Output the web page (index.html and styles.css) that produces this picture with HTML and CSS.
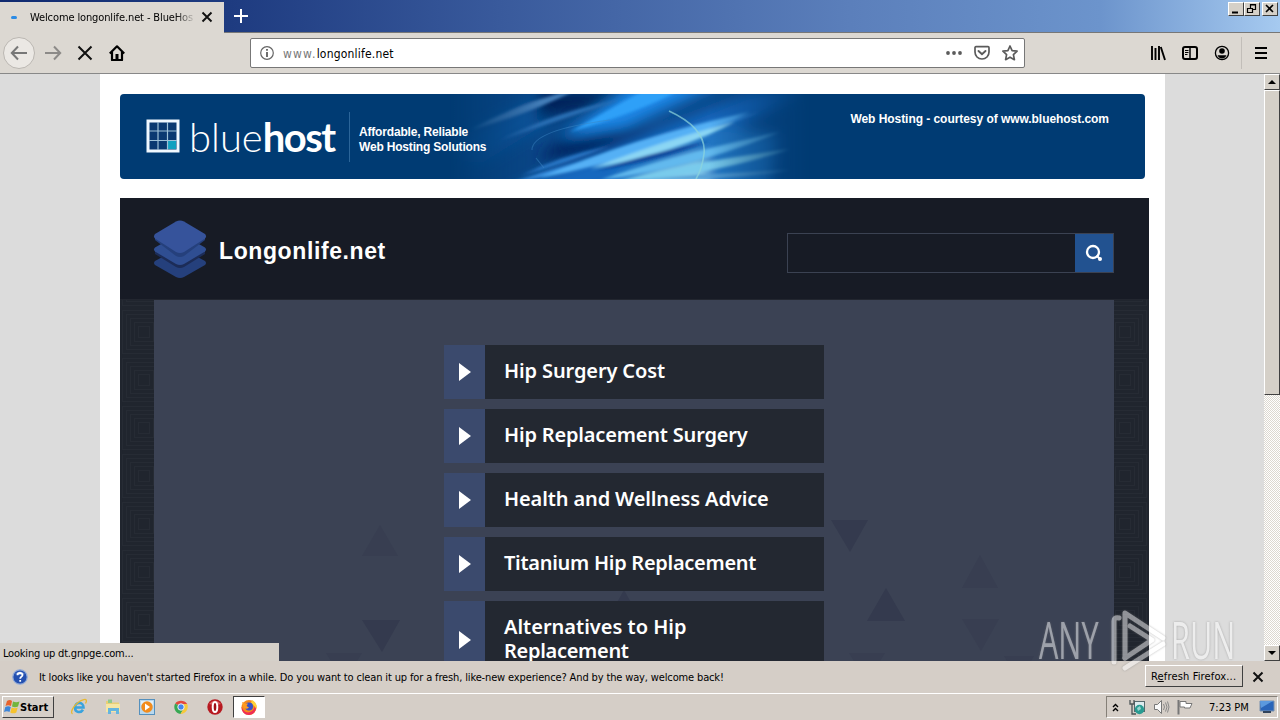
FILE: index.html
```html
<!DOCTYPE html>
<html lang="en">
<head>
  <meta charset="UTF-8" />
  <meta name="viewport" content="width=device-width, initial-scale=1.0"/>
  <title>Welcome longonlife.net - BlueHost</title>
  <link rel="stylesheet" href="styles.css">
</head>
<body>
  <div class="tab_bar">
    <div class="tab">
      <span class="tab_loader"></span>
      <span class="tab_title">Welcome longonlife.net - BlueHost</span>
      <svg class="tab_close" width="12" height="12" viewBox="0 0 12 12"><path d="M1.5 1.5l9 9M10.500 1.500l-9 9" stroke="#111" stroke-width="1.900"/></svg>
    </div>
    <svg class="new_tab" width="14" height="14" viewBox="0 0 14 14"><path d="M7 0v14M0 7h14" stroke="#fff" stroke-width="2"/></svg>
    <div class="window_buttons">
      <span class="window_button"><svg width="14" height="12" viewBox="0 0 14 12"><path d="M3 9.500h6" stroke="#000" stroke-width="2"/></svg></span>
      <span class="window_button"><svg width="14" height="12" viewBox="0 0 14 12"><path d="M5.500 5V1.500h5v5H8M5 2h6M2.500 5.500h5v4h-5zM2 5.500h6" fill="none" stroke="#000" stroke-width="1.200"/></svg></span>
      <span class="window_button close_button"><svg width="14" height="12" viewBox="0 0 14 12"><path d="M3 2l7 7M10 2l-7 7" stroke="#000" stroke-width="1.600"/></svg></span>
    </div>
  </div>

  <div class="toolbar">
    <span class="back_button"><svg width="18" height="16" viewBox="0 0 18 16"><path d="M17 8H2M8 1.500L1.800 8 8 14.500" fill="none" stroke="#777" stroke-width="2"/></svg></span>
    <svg class="forward_icon" width="18" height="16" viewBox="0 0 18 16"><path d="M1 8h15M10 1.500L16.200 8 10 14.500" fill="none" stroke="#8c8a88" stroke-width="2"/></svg>
    <svg class="stop_icon" width="16" height="16" viewBox="0 0 16 16"><path d="M1.500 1.500l13 13M14.500 1.500l-13 13" stroke="#111" stroke-width="2"/></svg>
    <svg class="home_icon" width="16" height="16" viewBox="0 0 16 16"><path d="M.8 8.500L8 1.300l7.200 7.200M3 7v8h10V7" fill="none" stroke="#000" stroke-width="2.200" stroke-linejoin="round"/><path d="M6.500 9h3v6h-3z"/></svg>
    <div class="url_bar">
      <svg class="info_icon" width="14" height="14" viewBox="0 0 14 14"><circle cx="7" cy="7" r="6.300" fill="none" stroke="#666" stroke-width="1.200"/><path d="M7 6v5M7 3v1.800" stroke="#555" stroke-width="1.700"/></svg>
      <p class="url"><span class="url_www">www.</span><span class="url_domain">longonlife.net</span></p>
      <svg class="dots_icon" width="16" height="16" viewBox="0 0 16 16" fill="#5b5b5b"><circle cx="2" cy="8" r="1.900"/><circle cx="8" cy="8" r="1.900"/><circle cx="14" cy="8" r="1.900"/></svg>
      <svg class="pocket_icon" width="16" height="16" viewBox="0 0 16 16" fill="none" stroke="#5b5b5b"><path d="M2 1.700h12c.7 0 1 .4 1 1V7c0 4-3 7-7 7S1 11 1 7V2.700c0-.6.300-1 1-1z" stroke-width="1.700"/><path d="M4.500 6L8 9.300 11.500 6" stroke-width="1.900" stroke-linecap="round"/></svg>
      <svg class="star_icon" width="16" height="16" viewBox="0 0 16 16"><path d="M8 1l2.100 4.600 5 .6-3.700 3.500 1 5L8 12.200l-4.400 2.500 1-5L.9 6.200l5-.6z" fill="none" stroke="#5b5b5b" stroke-width="1.700" stroke-linejoin="round"/></svg>
    </div>
    <svg class="library_icon" width="16" height="16" viewBox="0 0 16 16"><path d="M2 1v14M5.500 3v12M9 1v14M10.800 2l4.200 13" stroke="#000" stroke-width="1.900"/></svg>
    <svg class="sidebar_icon" width="16" height="16" viewBox="0 0 16 16"><rect x="1" y="2" width="14" height="12" rx="2" fill="none" stroke="#000" stroke-width="2"/><path d="M8 2v12" stroke="#000" stroke-width="1.500"/><path d="M3 5.500h3.500M3 7.500h3.500M3 9.500h2.500" stroke="#000"/></svg>
    <svg class="account_icon" width="16" height="16" viewBox="0 0 16 16"><circle cx="8" cy="8" r="6.600" fill="none" stroke="#000" stroke-width="1.300"/><circle cx="8" cy="6" r="2.800"/><path d="M3.500 10.300h9c-1 2.300-2.600 3.200-4.500 3.200s-3.500-.9-4.500-3.200z"/></svg>
    <span class="toolbar_line"></span>
    <svg class="menu_icon" width="14" height="14" viewBox="0 0 14 14"><path d="M1 2h12M1 7h12M1 12h12" stroke="#000" stroke-width="2"/></svg>
  </div>

  <div class="viewport">
    <div class="page">
      <div class="banner">
        <svg class="banner_art" width="360" height="85" viewBox="0 0 360 85">
          <defs>
            <linearGradient id="fade" x1="0" x2="1" y1="0" y2="0">
              <stop offset="0" stop-color="#fff" stop-opacity="0"/>
              <stop offset=".25" stop-color="#fff"/>
              <stop offset=".72" stop-color="#fff"/>
              <stop offset="1" stop-color="#fff" stop-opacity="0"/>
            </linearGradient>
            <mask id="edges"><rect width="360" height="85" fill="url(#fade)"/></mask>
            <filter id="soft" filterUnits="userSpaceOnUse" x="-40" y="-40" width="440" height="170"><feGaussianBlur stdDeviation="7"/></filter>
            <filter id="thin" filterUnits="userSpaceOnUse" x="-40" y="-40" width="440" height="170"><feGaussianBlur stdDeviation="1.500"/></filter>
          </defs>
          <g mask="url(#edges)">
            <rect width="360" height="85" fill="#0a4788"/>
            <g filter="url(#soft)">
              <path d="M-20 60L110-10h50L30 70z" fill="#0d559c"/>
              <path d="M90-5h90L140 14 85 26z" fill="#03215a"/>
              <path d="M85 66L120 40 210 30 160 60z" fill="#05235f"/>
              <path d="M110 44L190-15h90L175 34z" fill="#1b86e6"/>
              <path d="M30 110L120 70 300 0 370-10 240 60 140 100z" fill="#1468bf"/>
              <path d="M150 105L180 66 270 32 330 40 320 105z" fill="#2377c4"/>
              <path d="M170 105L210 76 255 60 258 105z" fill="#86cdec"/>
            </g>
            <g filter="url(#thin)">
              <path d="M120 38Q165 12 195-4h35Q190 18 120 38z" fill="#2da0f8"/>
              <path d="M20 36Q70 8 130-6 80 20 20 36z" fill="#427db8"/>
              <path d="M50 46Q110 16 170 6 110 26 50 46z" fill="#2a6fb5"/>
              <path d="M50 92Q150 60 310 18 210 58 50 92z" fill="#3a92e2"/>
              <path d="M90 84Q180 44 300 18 210 60 90 84z" fill="#55b0f5"/>
              <path d="M140 75Q220 44 285 28 230 58 140 75z" fill="#8bd6f4"/>
              <path d="M145 77Q200 59 260 47 210 67 145 77z" fill="#0c489c"/>
              <path d="M150 86Q210 64 330 38 240 75 150 86z" fill="#62b9ee"/>
              <path d="M165 88Q230 70 340 55 260 82 165 88z" fill="#79cbec"/>
              <path d="M190 86Q250 80 340 76 280 87 190 86z" fill="#549fd6"/>
              <path d="M70 82Q110 62 160 52 120 68 70 82z" fill="#2b78c8"/>
            </g>
            <path d="M219 17C245 29 256 43 254 60Q252 75 246 85" fill="none" stroke="#8fd5dc" stroke-width="1.600" opacity=".7"/>
            <path d="M160 26Q82 36 82 56M86 64l8 10" fill="none" stroke="#3b85c4" stroke-width="1.200" opacity=".5"/>
          </g>
        </svg>
        <svg class="banner_logo" width="34" height="34" viewBox="0 0 34 34">
          <rect x="2" y="2" width="30" height="30" fill="#0a3971" stroke="#f0f8ff" stroke-width="3"/>
          <path d="M22 22h8v8h-8z" fill="#12a0c0"/>
          <path d="M12 3v28M21.500 3v28M3 12h28M3 21.500h28" stroke="#9ec1d8" stroke-width="1.200"/>
        </svg>
        <p class="banner_name"><span class="name_light">blue</span><span class="name_bold">host</span></p>
        <p class="banner_slogan">Affordable, Reliable<br>Web Hosting Solutions</p>
        <p class="banner_courtesy">Web Hosting - courtesy of www.bluehost.com</p>
      </div>

      <div class="site">
        <div class="site_header">
          <svg class="site_logo" width="54" height="60" viewBox="0 0 54 60">
            <path d="M2 41L24 29q3-1.500 6 0l22 12q2 2 0 4L31 57q-4 2-8 0L2 45q-2-2 0-4z" fill="#25407c"/>
            <path d="M2 30L27 40l25-10v4L31 47q-4 2-8 0L2 34z" fill="#1c2c57"/>
            <path d="M2 27.500L24 15q3-1.500 6 0l22 12.500q2 2 0 4L31 44q-4 2-8 0L2 31.500q-2-2 0-4z" fill="#2f4e92"/>
            <path d="M2 16h50v4L31 36q-4 2-8 0L2 20z" fill="#25407c"/>
            <path d="M2 14L23 1.500q4-2 8 0L52 14q2 2 0 4.500L31 32q-4 2-8 0L2 18.500q-2-2 0-4.500z" fill="#36539b"/>
          </svg>
          <h1 class="site_title">Longonlife.net</h1>
          <div class="search">
            <span class="search_input"></span>
            <span class="search_button"><svg width="18" height="18" viewBox="0 0 18 18"><circle cx="8" cy="8" r="6" fill="none" stroke="#fff" stroke-width="2.300"/><path d="M11.500 11.500l3 3" stroke="#fff" stroke-width="2"/><circle cx="15" cy="15" r="2" fill="#fff"/></svg></span>
          </div>
        </div>
        <div class="site_body">
          <svg class="side_pattern" width="34" height="361">
            <defs>
              <pattern id="squares" width="48" height="48" patternUnits="userSpaceOnUse" x="0" y="8">
                <g fill="none" stroke="#2a2f39"><rect x="2.500" y="2.500" width="43" height="43"/><rect x="6.500" y="6.500" width="35" height="35"/><rect x="10.500" y="10.500" width="27" height="27"/><rect x="14.500" y="14.500" width="19" height="19"/><rect x="18.500" y="18.500" width="11" height="11"/></g>
              </pattern>
            </defs>
            <rect width="34" height="361" fill="url(#squares)"/>
          </svg>
          <div class="content">
            <svg class="triangles" width="960" height="361" viewBox="0 0 960 361">
              <g fill="#343a4e">
                <path d="M677 220h37l-18 32z"/>
                <path d="M732 288l19 33h-38z"/>
                <path d="M208 320h38l-18 32z"/>
                <path d="M470 290l18 32h-36z"/>
              </g>
              <g fill="#383e51">
                <path d="M826 255l18 33h-36z"/>
                <path d="M808 319h37l-18 32z"/>
                <path d="M226 225l18 31h-36z"/>
                <path d="M172 353h36l-5 8h-26zM695 353h36l-5 8h-26zM850 356h30l-3 5h-24z"/>
              </g>
            </svg>
            <div class="links">
              <div class="link"><span class="link_arrow"></span><p class="link_text link_cost">Hip Surgery Cost</p></div>
              <div class="link"><span class="link_arrow"></span><p class="link_text link_surgery">Hip Replacement Surgery</p></div>
              <div class="link"><span class="link_arrow"></span><p class="link_text link_health">Health and Wellness Advice</p></div>
              <div class="link"><span class="link_arrow"></span><p class="link_text link_titanium">Titanium Hip Replacement</p></div>
              <div class="link"><span class="link_arrow"></span><p class="link_text">Alternatives to Hip<br><span class="link_second">Replacement</span></p></div>
            </div>
          </div>
          <svg class="side_pattern right_pattern" width="35" height="361"><rect x="-13" width="48" height="361" fill="url(#squares)"/></svg>
        </div>
      </div>
    </div>
    <div class="scrollbar">
      <span class="scroll_button"><svg width="8" height="4" viewBox="0 0 8 4"><path d="M4 0l4 4H0z"/></svg></span>
      <span class="scroll_thumb"></span>
      <span class="scroll_space"></span>
      <span class="scroll_button"><svg width="8" height="4" viewBox="0 0 8 4"><path d="M0 0h8L4 4z"/></svg></span>
    </div>
    <div class="status">Looking up dt.gnpge.com...</div>
  </div>

  <div class="notice">
    <svg class="help_icon" width="16" height="16" viewBox="0 0 16 16"><circle cx="8" cy="8" r="7.200" fill="#2450b0" stroke="#8fa9d8" stroke-width="1.200"/><path d="M3 5q5-5 10 0-5 2-10 0z" fill="#6488d2"/><path d="M5.500 6.200C5.500 3.300 10.500 3.300 10.500 6c0 1.600-2.300 1.700-2.300 3.700M8.200 10.900v1.900" fill="none" stroke="#fff" stroke-width="1.800"/></svg>
    <p class="notice_text">It looks like you haven't started Firefox in a while. Do you want to clean it up for a fresh, like-new experience? And by the way, welcome back!</p>
    <div class="refresh_button">R<u>e</u>fresh Firefox...</div>
    <svg class="notice_close" width="12" height="12" viewBox="0 0 12 12"><path d="M1.500 1.500l9 9M10.500 1.500l-9 9" stroke="#111" stroke-width="2"/></svg>
  </div>

  <div class="taskbar">
    <div class="start_button">
      <svg width="16" height="16" viewBox="0 0 16 16"><path d="M3 2q3-2 5 0L7 7Q4 5.500 1.500 7z" fill="#e8622c"/><path d="M9 2.500q3 1.500 6.500 0L14 7.500q-3 1.500-6 0z" fill="#72b53c"/><path d="M1.300 8q3-1.700 5.500 0L5.500 13Q3 11.500 0 13z" fill="#3d85d8"/><path d="M7.700 8.500q3 1.500 6 0L12.300 13.500q-3 1.700-6 0z" fill="#f6c22d"/></svg>
      <span>Start</span>
    </div>
    <svg class="task_icon ie_icon" width="18" height="18" viewBox="0 0 18 18"><path d="M4.500 9.500h9c0-6-8.500-6-8.500 0 0 5.500 6 5.500 8 2.300" fill="none" stroke="#3aa3dd" stroke-width="2.600"/><path d="M2.500 16C-1 14 6 4 13 1.800c4-1.300 4 1.200 2.500 3.700" fill="none" stroke="#e8b830" stroke-width="1.300"/></svg>
    <svg class="task_icon" width="18" height="18" viewBox="0 0 18 18"><path d="M2 3h5l1 1.500h7V14H2z" fill="#e9cf75"/><path d="M4 1.500h4V5H4z" fill="#8fc98d"/><path d="M2 6h14v8H2z" fill="#f5e6a4"/><path d="M4 16V10h11v6h-3v-3H7v3z" fill="#65b5df"/></svg>
    <svg class="task_icon" width="18" height="18" viewBox="0 0 18 18"><rect x="1.500" y="1.500" width="15" height="15" fill="#b9d8ee" stroke="#5590bd"/><path d="M3 3h12v4H3z" fill="#e1f0fa"/><circle cx="9" cy="9" r="5.700" fill="#f28c1d"/><path d="M7 5.500l5 3.500-5 3.500z" fill="#fff"/></svg>
    <svg class="task_icon" width="18" height="18" viewBox="0 0 18 18"><path d="M9 9L3.200 5.500C5.500 1.800 12.500 1.500 15.200 6H9z" fill="#e4483c"/><path d="M9 9l-5.800-3.500C.8 9.500 3.200 15.300 8.500 16l3-5z" fill="#38a853"/><path d="M9 6h6.200c2 4.500-1.400 10-6.700 10l3.500-6z" fill="#f6c93b"/><circle cx="9" cy="9" r="3.200" fill="#4386ed" stroke="#f2f2f2"/></svg>
    <svg class="task_icon" width="18" height="18" viewBox="0 0 18 18"><circle cx="9" cy="9" r="7.700" fill="#b71920"/><path d="M3 6q6-7 12 0-6 2-12 0z" fill="#dc6264"/><ellipse cx="9" cy="9" rx="2.300" ry="5" fill="#a00f17" stroke="#fff" stroke-width="2"/></svg>
    <div class="task_active">
      <svg width="18" height="18" viewBox="0 0 18 18"><circle cx="9" cy="9.500" r="7.500" fill="#f78a1d"/><path d="M13 3c5 4 4 13-4 14-5 0-8-4-7.300-8.500C3 14 8 16 12 13s3-7 1-10z" fill="#ef2d55"/><path d="M12 2c4 2 5.500 6 4.300 9C15 8 13 7 11 5z" fill="#ffd338"/><circle cx="9" cy="8.500" r="4" fill="#3851c7"/><path d="M2 4l3 1.500h3L6.500 8 9 9.500Q6 12 3.500 9.500z" fill="#ff9b20"/></svg>
    </div>
    <div class="tray">
      <svg class="tray_arrows" width="7" height="9" viewBox="0 0 7 9"><path d="M1 4l2.500-2.500L6 4M1 8l2.500-2.500L6 8" fill="none" stroke="#000" stroke-width="1.400"/></svg>
      <svg class="tray_network" width="16" height="16" viewBox="0 0 16 16"><rect x="5.500" y="2.500" width="10" height="10" fill="#dcebee" stroke="#56696d"/><path d="M1 1v4h4V1M3 5v10h4" fill="none" stroke="#4d5557" stroke-width="1.300"/><circle cx="10.500" cy="10.500" r="4.700" fill="#299b91"/><path d="M8 9l3-2 1 3-3 2z" fill="#9bd5d0"/></svg>
      <svg class="tray_sound" width="17" height="16" viewBox="0 0 17 16"><path d="M1.500 5.500h3l4-4v13l-4-4h-3z" fill="#f8f8f8" stroke="#777"/><path d="M10.500 5q2 3 0 6M12.500 3.500q3 4.500 0 9M14.500 2.500q3 5.500 0 11" fill="none" stroke="#888"/></svg>
      <svg class="tray_flag" width="16" height="16" viewBox="0 0 16 16"><path d="M1.500 1v14.500" stroke="#777" stroke-width="2"/><path d="M3 2.500h6v2h6l-2 4.500H7.500V8H3z" fill="#fff" stroke="#777"/></svg>
      <span class="clock">7:23 PM</span>
      <svg class="tray_desktop" width="16" height="14" viewBox="0 0 16 14"><path d="M1 1h14v10H1z" fill="#2a65b9" stroke="#7890ad"/><path d="M1 1h13L2 8z" fill="#5b99de"/><path d="M4 11h8v2H4z" fill="#31435c"/></svg>
    </div>
  </div>

  <div class="watermark">
    <span class="mark_any">ANY</span>
    <svg width="62" height="66" viewBox="0 0 62 66"><g fill="none" stroke="#fff" stroke-width="5" stroke-linejoin="round" stroke-linecap="round"><path d="M10 11q-5-1-5 3v41"/><path d="M16 51V6l38 25"/><path d="M21 19l22 14-27 18"/><path d="M54 37L16 61"/></g></svg>
    <span class="mark_run">RUN</span>
  </div>
</body>
</html>
```

FILE: styles.css
```css
body {
  margin: 0;
  width: 1280px;
  height: 720px;
  overflow: hidden;
  position: relative;
  display: flex;
  flex-direction: column;
  font-family: "DejaVu Sans Condensed", "DejaVu Sans", sans-serif;
  font-stretch: condensed;
  font-size: 11px;
  color: #000;
}

p, h1 {
  margin: 0;
}

svg {
  display: block;
  flex-shrink: 0;
}

span {
  white-space: nowrap;
}

.tab_bar {
  height: 33px;
  box-sizing: border-box;
  display: flex;
  border-bottom: 1px solid #777;
  background: linear-gradient(90deg, #102a70 0, #1e3b80 230px, #395a9c 500px, #5b7fbb 850px, #6c94cc 1100px, #a6caf0 1280px);
}

.tab {
  width: 224px;
  height: 31px;
  margin-top: 2px;
  padding-bottom: 1px;
  margin-bottom: -1px;
  display: flex;
  align-items: center;
  background: #dcd8d2;
}

.tab_loader {
  width: 6px;
  height: 3px;
  margin-left: 11px;
  border-radius: 2px;
  background: #2b8be5;
}

.tab_title {
  width: 163px;
  margin-left: 13px;
  overflow: hidden;
  letter-spacing: -0.12px;
  -webkit-mask-image: linear-gradient(90deg, #000 145px, transparent 166px);
}

.tab_close {
  margin: -2px 0 0 8px;
}

.new_tab {
  margin: 9px 0 0 10px;
}

.window_buttons {
  display: flex;
  margin: 2px 2px 0 auto;
}

.window_button {
  width: 16px;
  height: 14px;
  box-sizing: border-box;
  border: 1px solid;
  border-color: #fff #404040 #404040 #fff;
  background: #d5d0c8;
}

.close_button {
  margin-left: 2px;
}

.toolbar {
  height: 41px;
  box-sizing: border-box;
  display: flex;
  align-items: center;
  border-bottom: 1px solid #888;
  background: #dcd8d2;
}

.back_button {
  width: 32px;
  height: 32px;
  margin-left: 3px;
  box-sizing: border-box;
  border: 1px solid #bbb7b2;
  border-radius: 50%;
  display: flex;
  align-items: center;
  justify-content: center;
  background: #ebe8e4;
}

.forward_icon {
  margin-left: 9px;
}

.stop_icon {
  margin-left: 15px;
}

.home_icon {
  margin-left: 16px;
}

.url_bar {
  width: 775px;
  height: 30px;
  margin-left: 125px;
  box-sizing: border-box;
  border: 1px solid #777;
  border-radius: 2px;
  display: flex;
  align-items: center;
  background: #fff;
}

.info_icon {
  margin-left: 9px;
}

.url {
  margin-left: 9px;
  padding-top: 1px;
  font-size: 12px;
}

.url_www {
  letter-spacing: 1.2px;
  color: #777;
}

.url_domain {
  letter-spacing: 0.2px;
}

.dots_icon {
  margin-left: auto;
}

.pocket_icon {
  margin-left: 12px;
}

.star_icon {
  margin: 0 6px 0 12px;
}

.library_icon {
  margin-left: 125px;
}

.sidebar_icon,
.account_icon {
  margin-left: 16px;
}

.toolbar_line {
  width: 1px;
  height: 32px;
  margin-left: 11px;
  background: #c2beb9;
}

.menu_icon {
  margin-left: 12px;
}

.viewport {
  height: 587px;
  position: relative;
  display: flex;
  justify-content: space-between;
  overflow: hidden;
  background: #dcdcdc;
}

.page {
  width: 1065px;
  margin-left: 100px;
  padding: 20px 0 0 20px;
  box-sizing: border-box;
  background: #fff;
}

.banner {
  width: 1025px;
  height: 85px;
  position: relative;
  display: flex;
  border-radius: 4px;
  overflow: hidden;
  background: #003b73;
  color: #fff;
  font: bold 12px/15px "Liberation Sans", sans-serif;
}

.banner_art {
  position: absolute;
  left: 330px;
  top: 0;
}

.banner_logo {
  margin: 25px 0 0 26px;
}

.banner_name {
  width: 160px;
  margin: 20px 0 0 9px;
  font: 40px/46px Lato, sans-serif;
}

.name_light {
  font-weight: 300;
}

.name_bold {
  font-weight: 700;
  letter-spacing: -1.5px;
}

.banner_slogan {
  height: 50px;
  margin-top: 18px;
  padding: 13px 0 0 9px;
  box-sizing: border-box;
  border-left: 1px solid #2b6599;
  position: relative;
  letter-spacing: -0.18px;
}

.banner_courtesy {
  margin: 18px 36px 0 auto;
  letter-spacing: -0.05px;
}

.site {
  width: 1029px;
  height: 463px;
  margin-top: 19px;
  background: #171b25;
}

.site_header {
  height: 101px;
  display: flex;
}

.site_logo {
  margin: 22px 0 0 33px;
}

.site_title {
  margin: 37px 0 0 12px;
  font: bold 23px/32px "Liberation Sans", sans-serif;
  letter-spacing: 0.6px;
  color: #fff;
}

.search {
  width: 327px;
  height: 40px;
  margin: 35px 35px 0 auto;
  box-sizing: border-box;
  border: 1px solid #3b4252;
  display: flex;
}

.search_input {
  flex: 1;
}

.search_button {
  width: 38px;
  display: flex;
  align-items: center;
  justify-content: center;
  background: #225290;
}

.site_body {
  display: flex;
  height: 362px;
  border-top: 1px solid #22262f;
  background: #20252e;
}

.side_pattern {
  opacity: 0.6;
}

.right_pattern {
  transform: scaleX(-1);
}

.content {
  width: 960px;
  position: relative;
  background: #3b4254;
}

.triangles {
  position: absolute;
  left: 0;
  top: 0;
}

.links {
  width: 380px;
  margin: 45px 0 0 290px;
  position: relative;
  display: flex;
  flex-direction: column;
  gap: 10px;
}

.link {
  display: flex;
  min-height: 54px;
  background: #232831;
}

.link_arrow {
  width: 41px;
  display: flex;
  align-items: center;
  background: #3b4a6d;
}

.link_arrow::after {
  content: "";
  margin-left: 15px;
  border: solid transparent;
  border-width: 9px 0 9px 12px;
  border-left-color: #fff;
}

.link_text {
  padding: 14px 0 16px 19px;
  font: 600 20px/24px "Noto Sans", "Open Sans", sans-serif;
  color: #fff;
}

.link_cost,
.link_health {
  letter-spacing: -0.12px;
}

.link_surgery {
  letter-spacing: -0.18px;
}

.link_titanium {
  letter-spacing: -0.28px;
}

.link_second {
  letter-spacing: -0.3px;
}

.scrollbar {
  width: 16px;
  display: flex;
  flex-direction: column;
  background: repeating-conic-gradient(#fff 0 25%, #dcd8d0 0 50%) 0 0 / 2px 2px;
}

.scroll_button,
.scroll_thumb {
  height: 16px;
  box-sizing: border-box;
  border: 1px solid;
  border-color: #fff #404040 #404040 #fff;
  display: flex;
  align-items: center;
  justify-content: center;
  background: #d5d0c8;
}

.scroll_thumb {
  height: 305px;
}

.scroll_space {
  flex: 1;
}

.status {
  position: absolute;
  left: 0;
  bottom: 0;
  width: 279px;
  height: 18px;
  padding-left: 3px;
  box-sizing: border-box;
  line-height: 21px;
  letter-spacing: -0.2px;
  background: #d5d0c9;
}

.notice {
  height: 32px;
  display: flex;
  align-items: center;
  background: #d5cec7;
}

.help_icon {
  margin-left: 12px;
}

.notice_text {
  width: 1106px;
  margin-left: 11px;
  letter-spacing: -0.14px;
}

.refresh_button {
  width: 98px;
  height: 22px;
  margin-top: -2px;
  padding-left: 5px;
  box-sizing: border-box;
  border: 1px solid;
  border-color: #fff #404040 #404040 #fff;
  line-height: 21px;
  letter-spacing: 0.15px;
  white-space: nowrap;
}

.notice_close {
  margin-left: 9px;
}

.taskbar {
  height: 27px;
  box-sizing: border-box;
  border-top: 1px solid #fff;
  display: flex;
  align-items: center;
  background: #d5cec7;
}

.start_button {
  width: 52px;
  height: 22px;
  margin-left: 2px;
  padding-left: 1px;
  box-sizing: border-box;
  border: 1px solid;
  border-color: #fff #404040 #404040 #fff;
  display: flex;
  align-items: center;
  font-weight: bold;
}

.task_icon {
  margin-left: 16px;
}

.task_active {
  width: 32px;
  height: 22px;
  margin-left: 9px;
  box-sizing: border-box;
  border: 1px solid;
  border-color: #404040 #fff #fff #404040;
  display: flex;
  align-items: center;
  justify-content: center;
  background: #fff;
}

.tray {
  width: 172px;
  height: 22px;
  margin: 0 2px 0 auto;
  box-sizing: border-box;
  border: 1px solid;
  border-color: #858078 #fff #fff #858078;
  display: flex;
  align-items: center;
}

.tray_arrows {
  margin-left: 5px;
}

.tray_network {
  margin-left: 10px;
}

.tray_sound {
  margin-left: 8px;
}

.tray_flag {
  margin-left: 7px;
}

.clock {
  width: 40px;
  margin-left: 16px;
}

.tray_desktop {
  margin-left: 10px;
}

.watermark {
  position: absolute;
  left: 1039px;
  top: 607px;
  display: flex;
  opacity: 0.5;
  color: #fff;
  font: 51px/56px "Open Sans", sans-serif;
  filter: drop-shadow(0 0 1px #777);
}

.mark_any,
.mark_run {
  width: 70px;
  height: 56px;
  margin-top: 4px;
  transform: scaleX(0.6);
  transform-origin: left;
}
```
